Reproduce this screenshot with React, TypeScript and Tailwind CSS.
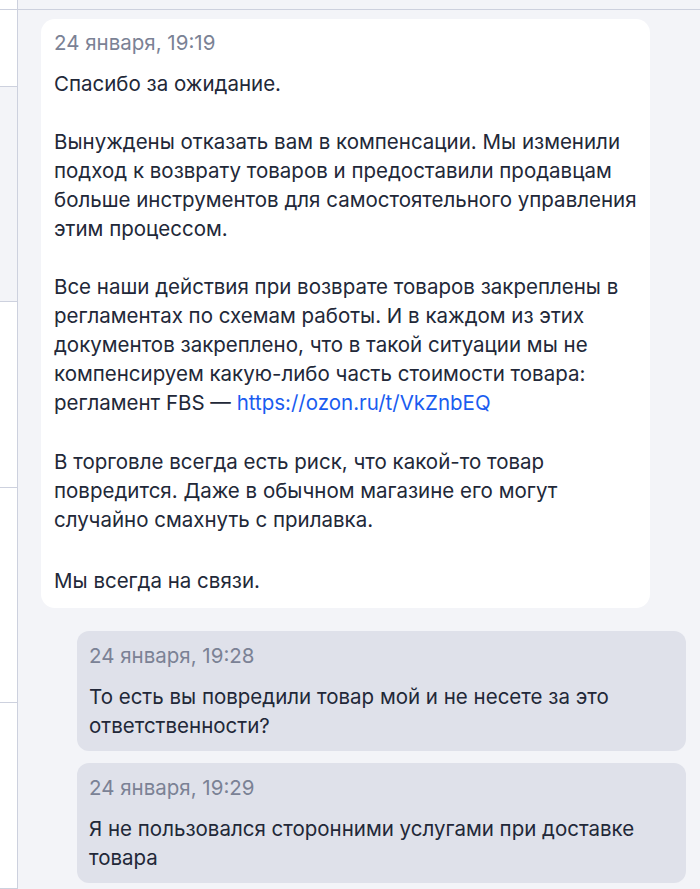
export default function App() {
  const sidebarRows = [
    { h: "h-[77px]", bg: "bg-white" },
    { h: "h-[215px]", bg: "bg-[#f3f4f8]" },
    { h: "h-[186px]", bg: "bg-white" },
    { h: "h-[215px]", bg: "bg-white" },
    { h: "h-[186px]", bg: "bg-white" },
  ];

  return (
    <div className="w-[700px] h-[889px] overflow-hidden bg-[#f3f4f8] font-['Inter',sans-serif] text-[20.5px] leading-[29px] text-[#222838]">
      <div className="h-[9px] flex">
        <div className="w-[18px] bg-white border-r border-[#cdd1de]" />
        <div className="flex-1" />
      </div>
      <div className="flex border-t border-[#cdd1de] h-[880px]">
        <div className="w-[18px] shrink-0 border-r border-[#cdd1de] flex flex-col">
          {sidebarRows.map((r, i) => (
            <div key={i} className={`${r.h} ${r.bg} shrink-0 border-b border-[#cdd1de]`} />
          ))}
        </div>
        <div className="flex-1 flex flex-col pt-[9px]">
          <div className="ml-[23px] w-[609px] bg-white rounded-[14px] pl-[13px] pr-[12px] pt-[9px] pb-[13px]">
            <div className="text-[#7b8295] mb-[12px]">24 января, 19:19</div>
            <p className="mb-[29px]">Спасибо за ожидание.</p>
            <p className="mb-[29px]">
              Вынуждены отказать вам в компенсации. Мы изменили подход к возврату товаров и предоставили продавцам
              больше инструментов для самостоятельного управления этим процессом.
            </p>
            <p className="mb-[30px]">
              Все наши действия при возврате товаров закреплены в регламентах по схемам работы. И в каждом из этих
              документов закреплено, что в такой ситуации мы не компенсируем какую-либо часть стоимости товара:
              регламент FBS — <a className="text-[#1a5cf0]">https://ozon.ru/t/VkZnbEQ</a>
            </p>
            <p className="mb-[32px]">
              В торговле всегда есть риск, что какой-то товар повредится. Даже в обычном магазине его могут случайно
              смахнуть с прилавка.
            </p>
            <p>Мы всегда на связи.</p>
          </div>

          <div className="ml-[59px] mt-[23px] w-[609px] bg-[#dfe1ea] rounded-[12px] pl-[12px] pr-[12px] pt-[10px] pb-[11px]">
            <div className="text-[#7b8295] mb-[12px]">24 января, 19:28</div>
            <p>То есть вы повредили товар мой и не несете за это ответственности?</p>
          </div>

          <div className="ml-[59px] mt-[12px] w-[609px] bg-[#dfe1ea] rounded-[12px] pl-[12px] pr-[12px] pt-[10px] pb-[11px]">
            <div className="text-[#7b8295] mb-[12px]">24 января, 19:29</div>
            <p>Я не пользовался сторонними услугами при доставке товара</p>
          </div>
        </div>
      </div>
    </div>
  );
}
